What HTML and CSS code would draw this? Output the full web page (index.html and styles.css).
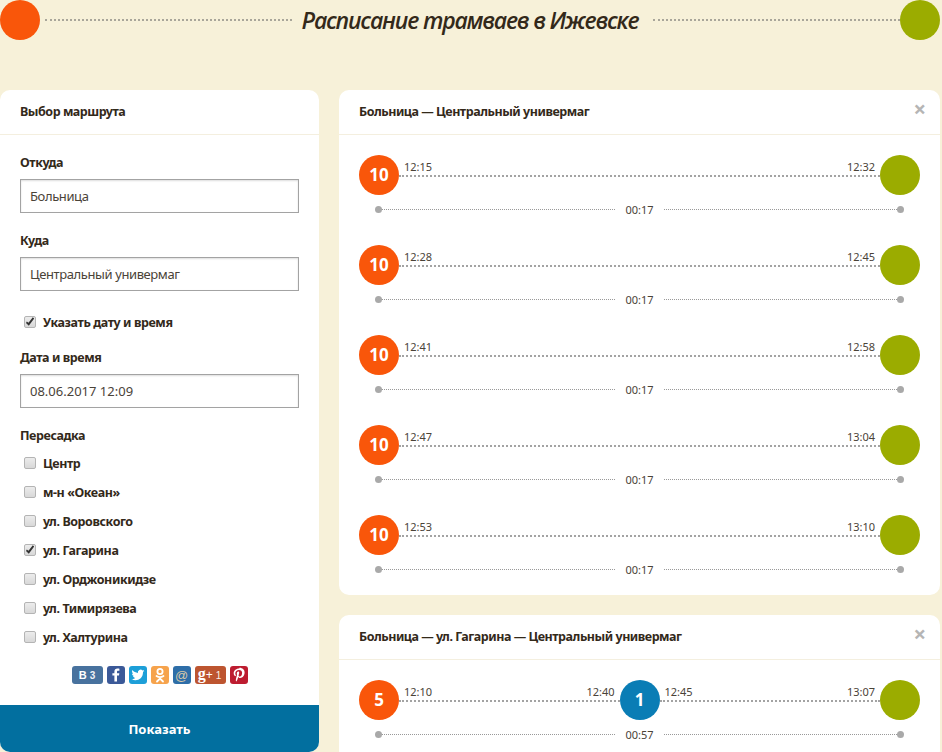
FILE: index.html
```html
<!DOCTYPE html>
<html lang="ru">
<head>
<meta charset="utf-8">
<title>Расписание трамваев в Ижевске</title>
<link rel="stylesheet" href="styles.css">
</head>
<body>
<header class="top">
  <span class="dot-big orange"></span>
  <span class="rule"></span>
  <h1>Расписание трамваев в Ижевске</h1>
  <span class="rule"></span>
  <span class="dot-big green"></span>
</header>
<main class="page">
  <aside class="panel">
    <h2 class="panel-head">Выбор маршрута</h2>
    <form class="form">
      <label class="lbl">Откуда</label>
      <input class="field" value="Больница">
      <label class="lbl">Куда</label>
      <input class="field" value="Центральный универмаг">
      <label class="check first"><input type="checkbox" checked>Указать дату и время</label>
      <label class="lbl">Дата и время</label>
      <input class="field num" value="08.06.2017 12:09">
      <label class="lbl">Пересадка</label>
      <div class="checks">
        <label class="check"><input type="checkbox">Центр</label>
        <label class="check"><input type="checkbox">м-н «Океан»</label>
        <label class="check"><input type="checkbox">ул. Воровского</label>
        <label class="check"><input type="checkbox" checked>ул. Гагарина</label>
        <label class="check"><input type="checkbox">ул. Орджоникидзе</label>
        <label class="check"><input type="checkbox">ул. Тимирязева</label>
        <label class="check"><input type="checkbox">ул. Халтурина</label>
      </div>
      <div class="share">
        <span class="soc wide vk"><b>В</b><i>3</i></span>
        <span class="soc fb"><svg viewBox="0 0 18 18"><path d="M10 15.500V9.600h2l.3-2.300H10V5.900c0-.7.200-1.100 1.100-1.100h1.300V2.700c-.3 0-1-.1-1.900-.1-1.900 0-3.100 1.100-3.100 3.100v1.600H5.400v2.300h2v5.900z" fill="#fff"/></svg></span>
        <span class="soc tw"><svg viewBox="0 0 18 18"><path d="M15.500 4.900c-.5.2-1 .4-1.500.4.500-.3 1-.8 1.200-1.500-.5.300-1.100.5-1.700.7a2.700 2.700 0 0 0-4.600 2.400C6.700 6.800 4.700 5.800 3.400 4.100c-.7 1.200-.4 2.800.8 3.600-.4 0-.8-.1-1.200-.3 0 1.300.9 2.400 2.100 2.700-.4.100-.8.100-1.200 0 .3 1.100 1.300 1.800 2.500 1.900-1.100.9-2.500 1.300-3.900 1.100 4.800 3 11.500.1 11.500-6.800 0-.1 0-.3 0-.4.5-.3 1-.8 1.500-1z" fill="#fff"/></svg></span>
        <span class="soc ok"><svg viewBox="0 0 18 18"><circle cx="9" cy="5.500" r="2.600" fill="none" stroke="#fff" stroke-width="1.800"/><path d="M5.500 10c2.200 1.500 4.800 1.500 7 0M9 11.500v1M6 15.500l3-3 3 3" fill="none" stroke="#fff" stroke-width="1.800" stroke-linecap="round"/></svg></span>
        <span class="soc ml">@</span>
        <span class="soc wide gp"><b>g</b><em>+</em><i>1</i></span>
        <span class="soc pi"><svg viewBox="0 0 18 18"><path d="M9.300 2.500c-3.700 0-5.600 2.500-5.600 4.700 0 1.300.5 2.500 1.600 2.900.2.100.3 0 .4-.2l.2-.6c0-.2 0-.3-.1-.4-.3-.4-.5-.9-.5-1.600 0-2 1.500-3.400 3.700-3.400 2 0 3.100 1.200 3.100 2.800 0 2.100-.9 3.900-2.300 3.900-.8 0-1.300-.6-1.200-1.400.2-.9.600-1.900.6-2.500 0-.6-.3-1.100-1-1.100-.8 0-1.400.8-1.400 1.900 0 .7.200 1.200.2 1.200l-1 4c-.3 1.200 0 2.600 0 2.800 0 .1.100.1.200 0 .1-.1 1-1.300 1.400-2.500l.6-2.100c.3.500 1.100 1 2 1 2.600 0 4.400-2.400 4.400-5.600 0-2.400-2-4.600-5.200-4.600z" fill="#fff"/></svg></span>
      </div>
    </form>
    <button class="submit" type="button">Показать</button>
  </aside>
  <section class="results">
    <article class="card">
      <h2 class="card-head">Больница — Центральный универмаг<span class="close">×</span></h2>
      <div class="card-body">
        <div class="trip">
          <div class="line"><span class="stop orange">10</span><div class="seg"><span>12:15</span><span>12:32</span></div><span class="stop green"></span></div>
          <div class="dur"><span class="pip"></span><span class="thin"></span><span class="tot">00:17</span><span class="thin"></span><span class="pip"></span></div>
        </div>
        <div class="trip">
          <div class="line"><span class="stop orange">10</span><div class="seg"><span>12:28</span><span>12:45</span></div><span class="stop green"></span></div>
          <div class="dur"><span class="pip"></span><span class="thin"></span><span class="tot">00:17</span><span class="thin"></span><span class="pip"></span></div>
        </div>
        <div class="trip">
          <div class="line"><span class="stop orange">10</span><div class="seg"><span>12:41</span><span>12:58</span></div><span class="stop green"></span></div>
          <div class="dur"><span class="pip"></span><span class="thin"></span><span class="tot">00:17</span><span class="thin"></span><span class="pip"></span></div>
        </div>
        <div class="trip">
          <div class="line"><span class="stop orange">10</span><div class="seg"><span>12:47</span><span>13:04</span></div><span class="stop green"></span></div>
          <div class="dur"><span class="pip"></span><span class="thin"></span><span class="tot">00:17</span><span class="thin"></span><span class="pip"></span></div>
        </div>
        <div class="trip">
          <div class="line"><span class="stop orange">10</span><div class="seg"><span>12:53</span><span>13:10</span></div><span class="stop green"></span></div>
          <div class="dur"><span class="pip"></span><span class="thin"></span><span class="tot">00:17</span><span class="thin"></span><span class="pip"></span></div>
        </div>
      </div>
    </article>
    <article class="card">
      <h2 class="card-head">Больница — ул. Гагарина — Центральный универмаг<span class="close">×</span></h2>
      <div class="card-body">
        <div class="trip">
          <div class="line"><span class="stop orange">5</span><div class="seg"><span>12:10</span><span>12:40</span></div><span class="stop blue">1</span><div class="seg"><span>12:45</span><span>13:07</span></div><span class="stop green"></span></div>
          <div class="dur"><span class="pip"></span><span class="thin"></span><span class="tot">00:57</span><span class="thin"></span><span class="pip"></span></div>
        </div>
      </div>
    </article>
  </section>
</main>
</body>
</html>
```
FILE: styles.css
```css
* { box-sizing: border-box; }
html, body { margin: 0; height: 752px; overflow: hidden; }
body { background: #f7f1d9; color: #33291a; font-family: "Noto Sans", "Open Sans", sans-serif; font-size: 13px; width: 942px; padding-right: 2px; }

.top { display: flex; align-items: center; height: 40px; margin-bottom: 50px; }
.top h1 { margin: 0 10px; font-size: 23px; line-height: 38px; font-style: italic; font-weight: 600; font-family: "Open Sans", sans-serif; letter-spacing: -1.2px; white-space: nowrap; }
.rule { flex: 1; border-top: 2px dotted #a9a69a; margin: -1px 0 0 5px; height: 0; }
.rule:nth-of-type(4) { margin: -1px 2px 0 0; }
.dot-big { width: 40px; height: 40px; border-radius: 50%; flex: none; }
.orange { background: #f9560a; }
.green { background: #9bac00; }
.blue { background: #0a7db5; }

.page { display: flex; gap: 20px; align-items: flex-start; }
.panel { flex: none; width: 319px; height: 662px; background: #fff; border-radius: 10px; display: flex; flex-direction: column; overflow: hidden; }
.panel-head, .card-head { margin: 0; height: 45px; line-height: 44px; padding: 0 20px; border-bottom: 1px solid #f4efdf; font-size: 12.500px; font-weight: 700; letter-spacing: -0.47px; position: relative; }
.form { flex: 1; padding: 19px 20px 0; display: flex; flex-direction: column; }
.lbl { font-weight: 700; font-size: 12.500px; letter-spacing: -0.42px; line-height: 17px; margin-bottom: 8px; }
.field { width: 279px; height: 34px; border: 1px solid #a3a3a3; padding: 0 9px; font: inherit; letter-spacing: -0.4px; color: #4a4338; margin-bottom: 19px; background: #fff; box-shadow: inset 0 1px 2px #ddd; border-radius: 0; }
.field.num { letter-spacing: 0; }
.check { display: flex; align-items: center; gap: 7px; height: 17px; padding-left: 4px; font-weight: 700; font-size: 12.500px; letter-spacing: -0.42px; line-height: 17px; }
.check.first { margin-top: 4px; margin-bottom: 18px; }
.checks { display: flex; flex-direction: column; gap: 12px; margin-top: 3px; }
.check input { appearance: none; margin: 0; width: 12px; height: 12px; flex: none; border: 1px solid #b4b4b4; border-radius: 2px; background: linear-gradient(#ececec, #d8d8d8); position: relative; top: -1px; }
.check input:checked::after { content: ""; position: absolute; inset: 0; background: #333; clip-path: polygon(18% 50%, 35% 62%, 78% 8%, 92% 20%, 38% 92%, 10% 64%); }

.share { display: flex; gap: 4px; justify-content: center; margin-top: 20px; }
.soc { width: 18px; height: 18px; border-radius: 3px; color: #fff; display: flex; align-items: center; justify-content: center; font-size: 11px; overflow: hidden; font-family: "Liberation Sans", sans-serif; }
.soc svg { width: 18px; height: 18px; display: block; }
.soc.wide { width: 31px; gap: 3px; }
.soc i { font-style: normal; font-size: 10px; opacity: .9; }
.soc em { font-style: normal; font-size: 12px; margin-left: -3px; }
.vk { background: #48729e; font-weight: 700; }
.fb { background: #3b5998; }
.tw { background: #1d9fd8; }
.ok { background: #f6a34c; }
.ml { background: #2e6ea8; color: #d8c9a8; font-size: 13px; }
.gp { background: #bd5530; }
.gp b { font-family: "Liberation Serif", serif; font-size: 16px; margin-top: -3px; margin-left: -1px; }
.pi { background: #bd1c30; }

.submit { height: 47px; border: 0; background: #026f9f; color: #fff; font: 700 13px "Noto Sans", sans-serif; flex: none; }

.results { flex: 1; min-width: 0; display: flex; flex-direction: column; gap: 20px; }
.card { background: #fff; border-radius: 10px; }
.close { position: absolute; right: 14px; top: -4px; color: #b5b5b5; font-size: 22px; font-weight: 700; letter-spacing: 0; }
.card-body { padding: 20px 20px 19px; display: flex; flex-direction: column; gap: 29px; }
.line { display: flex; height: 40px; }
.stop { width: 40px; height: 40px; border-radius: 50%; flex: none; color: #fff; font-size: 17px; font-weight: 700; line-height: 40px; text-align: center; }
.seg { flex: 1; height: 22px; padding: 0 5px; border-bottom: 2px dotted #a3a3a3; display: flex; justify-content: space-between; align-items: flex-end; font-size: 11px; line-height: 16px; color: #4a4338; }
.dur { display: flex; align-items: center; height: 14px; margin-top: 7px; padding: 0 16px; }
.pip { width: 7px; height: 7px; border-radius: 50%; background: #a9a9a9; flex: none; }
.thin { flex: 1; border-top: 1px dotted #999; }
.tot { margin: 0 10px; font-size: 11px; color: #4a4338; }
```
